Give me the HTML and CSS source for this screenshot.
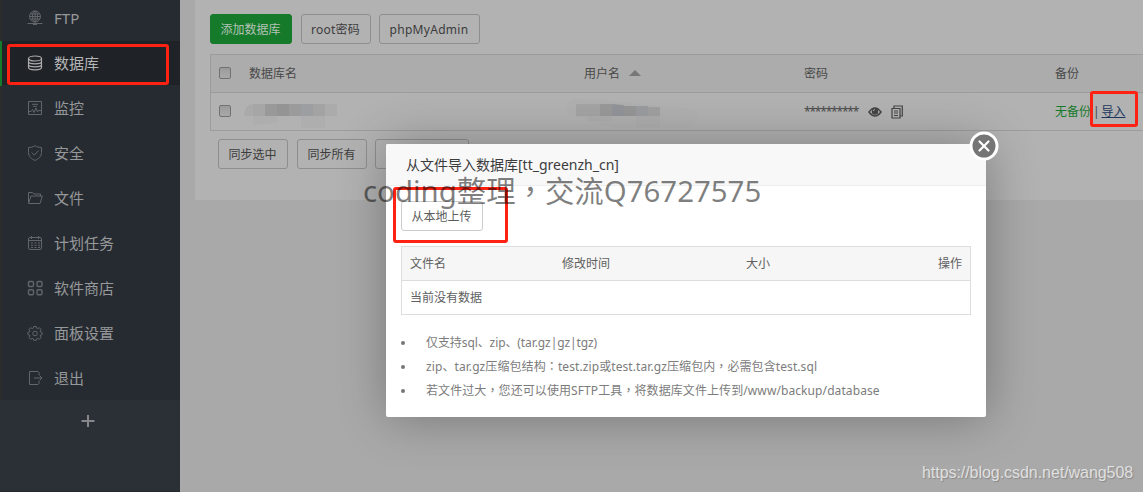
FILE: index.html
```html
<!DOCTYPE html>
<html lang="zh-CN">
<head>
<meta charset="utf-8">
<title>数据库</title>
<link rel="stylesheet" href="styles.css">
</head>
<body>
<div class="app">
  <aside class="sidebar">
    <nav class="menu">
      <a class="item"><svg class="icon" viewBox="0 0 16 16"><circle cx="8" cy="6.5" r="5.5"/><ellipse cx="8" cy="6.5" rx="2.6" ry="5.5"/><path d="M8 1v11M3 4h10M2.5 6.5h11M3 9h10M.5 13.5h15M6 14.5h4"/></svg><span>FTP</span></a>
      <a class="item active"><svg class="icon" viewBox="0 0 16 16"><ellipse cx="8" cy="3.5" rx="6.5" ry="2.5"/><path d="M1.5 3.5v9c0 1.4 2.9 2.3 6.5 2.3s6.5-.9 6.5-2.3v-9M1.5 6.5c0 1.4 2.9 2.3 6.5 2.3s6.5-.9 6.5-2.3M1.5 9.5c0 1.4 2.9 2.3 6.5 2.3s6.5-.9 6.5-2.3"/></svg><span>数据库</span></a>
      <a class="item"><svg class="icon" viewBox="0 0 16 16"><path d="M1.5 1.5h13v13h-13zM5 4.3h6M6 6.3h4M2 11.5h2l1.5-2 1.5 3 2-4.500 1.500 4 1-1.500h2.500"/></svg><span>监控</span></a>
      <a class="item"><svg class="icon" viewBox="0 0 16 16"><path d="M8 .7c2 1.300 4.300 1.800 6.500 1.800v5c0 3.900-2.800 6.300-6.500 7.900-3.700-1.600-6.500-4-6.500-7.900v-5C3.700 2.500 6 2 8 .7zM4.800 7.500l2.500 2.700 4.200-4.700"/></svg><span>安全</span></a>
      <a class="item"><svg class="icon" viewBox="0 0 16 16"><path d="M1.500 12.500v-10h4l1.500 1.500h6.500v2M1.500 13.500l2.500-7.500h11.300l-2.300 7.500z"/></svg><span>文件</span></a>
      <a class="item"><svg class="icon" viewBox="0 0 16 16"><rect x="1.500" y="2.500" width="13" height="12" rx="1.500"/><path d="M1.500 5.500h13M4.500 1v3M11.500 1v3"/><path stroke-dasharray="2 1.500" d="M4 8h9M4 10.300h9M4 12.500h9"/></svg><span>计划任务</span></a>
      <a class="item"><svg class="icon bold" viewBox="0 0 16 16"><rect x="1.500" y="1.500" width="5" height="5" rx="1.200"/><rect x="10" y="1.500" width="5" height="5" rx="1.200"/><rect x="1.500" y="9.700" width="5" height="5" rx="1.200"/><rect x="10" y="9.700" width="5" height="5" rx="1.200"/></svg><span>软件商店</span></a>
      <a class="item"><svg class="icon" viewBox="0 0 16 16"><path d="M6.700 1.500h2.600l.4 1.700 1 .5 1.600-1 1.700 1.700-.9 1.600.4 1 1.600.4v2.200l-1.600.4-.4 1 .9 1.600-1.700 1.700-1.600-.9-1 .4-.4 1.500H6.700l-.4-1.500-1-.4-1.600.9L2 12.600l.9-1.600-.4-1-1.600-.4V7.400L2.500 7l.4-1L2 4.400l1.700-1.700 1.600 1 1-.5z"/><circle cx="8" cy="8.500" r="2.300"/></svg><span>面板设置</span></a>
      <a class="item"><svg class="icon" viewBox="0 0 16 16"><path d="M12 5V2.500l-1-1H2.500v13H11l1-1V11M7 8h8M12.500 5.500L15 8l-2.500 2.500"/></svg><span>退出</span></a>
    </nav>
    <div class="add"><svg class="plus" viewBox="0 0 14 14"><path d="M7 1v12M.5 7h13"/></svg></div>
  </aside>
  <main class="main">
    <section class="panel">
      <div class="tools">
        <button class="btn green w82">添加数据库</button><button class="btn w70"><span class="root">root密码</span></button><button class="btn w101"><span class="pma">phpMyAdmin</span></button>
      </div>
      <div class="grid">
        <div class="row head">
          <span class="check"></span><span>数据库名</span><span class="sort">用户名 <i class="caret"></i></span><span>密码</span><span>备份</span>
        </div>
        <div class="row">
          <span class="check"></span>
          <svg class="mosaic" viewBox="0 0 120 36"><path fill="#aaa" d="M0 23q1-12 9-12h12v12H0z"/><path fill="#a6a6a6" d="M9 11h12v12H9z"/><path fill="#999" d="M21 11h12v12H21z"/><path fill="#949494" d="M33 11h12v12H33z"/><path fill="#9b9b9b" d="M45 11h12v12H45z"/><path fill="#9c9ea1" d="M57 11h12v12H57z"/><path fill="#a3a3a3" d="M69 11h12v12H69z"/><path fill="#ababab" d="M81 11h12v12H81z"/><path fill="#aeaeae" d="M9 23h24v7l-24 2zM57 23h24v12H57z"/></svg>
          <svg class="mosaic user" viewBox="0 0 140 36"><path fill="#b0b0b0" d="M0 14q2-9 15-8l100 9q17 1 16 9-1 9-12 11H60Q40 36 22 27L2 23z"/><path fill="#a4a4a4" d="M9 11h24v12H9z"/><path fill="#999" d="M33 11h12l12 1v11H33z"/><path fill="#929499" d="M45 11l12 2v10H45z"/><path fill="#969696" d="M57 13h12v10H57z"/><path fill="#9a9ca0" d="M69 13h12v10H69z"/><path fill="#a0a0a0" d="M81 14h12v9H81z"/><path fill="#adadad" d="M21 23h24v5H21zM69 23h24v11H69z"/></svg>
          <span class="secret"><span class="stars">**********</span>
            <svg class="eye" viewBox="0 0 14 12"><path d="M1 6Q7-2 13 6 7 14 1 6z" fill="none" stroke="#444" stroke-width="1.500"/><circle cx="7" cy="5.500" r="3.200" fill="#444"/><path d="M5.300 5q.2-1.500 1.700-1.500" stroke="#aaa" fill="none"/></svg>
            <svg class="copy" viewBox="0 0 12 14"><path d="M3 3V1h8.300v10H9M1 3.500h8V13H1zM3 6h4M3 8h4M3 10.500h4" fill="none" stroke="#444" stroke-width="1.200"/></svg></span>
          <span class="backup"><b>无备份</b> | <u>导入</u></span>
        </div>
      </div>
      <div class="tools sync"><button class="btn w70">同步选中</button><button class="btn w70">同步所有</button><button class="btn w94"></button></div>
    </section>
  </main>
</div>

<div class="modal">
  <h1 class="title">从文件导入数据库[tt_greenzh_cn]</h1>
  <div class="body">
    <button class="btn light w82">从本地上传</button>
    <div class="files">
      <div class="frow fhead"><span>文件名</span><span>修改时间</span><span>大小</span><span class="end">操作</span></div>
      <div class="frow">当前没有数据</div>
    </div>
    <ul class="notes">
      <li><span class="tight">仅支持sql、zip、(tar.gz|gz|tgz)</span></li>
      <li><span class="wide">zip、tar.gz压缩包结构<i class="mid" lang="zh-TW">：</i>test.zip或test.tar.gz压缩包内<i class="mid" lang="zh-TW">，</i>必需包含test.sql</span></li>
      <li><span class="wide">若文件过大<i class="mid" lang="zh-TW">，</i>您还可以使用SFTP工具<i class="mid" lang="zh-TW">，</i>将数据库文件上传到/www/backup/database</span></li>
    </ul>
  </div>
  <svg class="close" viewBox="0 0 30 30"><circle cx="15" cy="15" r="13" fill="#757575" stroke="#fff" stroke-width="3"/><path d="M10.500 10.500l9 9M19.500 10.500l-9 9" stroke="#fff" stroke-width="2.200" stroke-linecap="round"/></svg>
</div>
<div class="mark mark-menu"></div>
<div class="mark mark-import"></div>
<div class="mark mark-upload"></div>
<div class="coding">coding整理<i class="mid" lang="zh-TW">，</i>交流Q76727575</div>
<div class="url">https://blog.csdn.net/wang508</div>
</body>
</html>
```
FILE: styles.css
```css
* { box-sizing: border-box; }
body {
  margin: 0;
  width: 1143px;
  height: 492px;
  overflow: hidden;
  position: relative;
  background: #a9a9a9;
  color: #484848;
  font: 12px/18px "Noto Sans", "Noto Sans CJK SC", sans-serif;
}
.app { display: flex; height: 492px; overflow: hidden; }
.sidebar { width: 180px; flex: none; background: #2b2f36; border-bottom: 1px solid #25282c; }
.menu { margin-top: -4px; background: #262b31; }
.item {
  height: 45px;
  display: flex;
  align-items: center;
  gap: 11px;
  padding: 0 0 2px 25px;
  border-left: 2px solid #2a2c2b;
  color: #96989a;
  font-size: 15px;
}
.menu .item:last-child { height: 44px; padding-bottom: 1px; }
.item.active { background: #1f2226; border-left-color: #167a2b; color: #b4b5b6; box-shadow: inset 0 -1px #262b31; }
.icon { width: 16px; height: 16px; fill: none; stroke: #62666a; stroke-width: 1; }
.active .icon { stroke: #aaa; stroke-width: 1.2; }
.icon.bold { stroke-width: 1.4; }
.add { display: flex; padding: 14px 0 0 81px; }
.plus { width: 14px; height: 14px; stroke: #85878a; stroke-width: 2; }
.main { flex: 1; padding-left: 15px; min-width: 0; }
.panel { height: 200px; background: #b2b2b2; padding: 14px 0 0 15px; overflow: hidden; }
.tools { display: flex; gap: 9px; height: 30px; }
.tools .w101 { margin-left: -1px; }
.btn {
  height: 30px;
  padding: 2px 1px 0 0;
  border: 1px solid #8e8e8e;
  border-radius: 3px;
  background: transparent;
  color: #3c3c3c;
  font: inherit;
  white-space: nowrap;
}
.btn.green { background: #167a2b; border-color: #167a2b; color: #b3c2b6; }
.btn.light { background: #fff; border-color: #ccc; color: #5c5c5c; display: block; }
.w70 { width: 70px; }
.w82 { width: 82px; }
.w94 { width: 94px; margin-left: -1px; }
.w101 { width: 101px; }
.pma { letter-spacing: .3px; }
.root { letter-spacing: .2px; }
.grid { margin-top: 10px; width: 950px; border: 1px solid #9c9c9c; }
.row {
  display: grid;
  grid-template-columns: 38px 335px 220px 251px 1fr;
  align-items: center;
  height: 37px;
}
.row.head { height: 38px; background: #acacac; border-bottom: 1px solid #9c9c9c; }
.check {
  width: 12px;
  height: 12px;
  margin: 0 0 2px 8px;
  border: 1px solid #717171;
  border-radius: 2px;
  background: linear-gradient(#9b9b9b, #a9a9a9);
}
.sort { display: flex; align-items: center; gap: 9px; }
.caret { border: 6px solid transparent; border-top: 0; border-bottom-color: #777; margin-bottom: 2px; }
.mosaic { width: 120px; height: 36px; margin: 0 0 2px -5px; }
.mosaic.user { width: 140px; margin-left: -17px; }
.secret { display: flex; align-items: center; gap: 9px; }
.stars { letter-spacing: -1.2px; width: 55px; }
.eye { width: 14px; height: 12px; margin-bottom: 1px; }
.copy { width: 12px; height: 14px; margin-bottom: 1px; }
.backup { word-spacing: -1.2px; }
.backup b { font-weight: 400; color: #167a2b; }
.backup u { color: #1c365c; }
.sync { margin: 8px 0 0 8px; }

.modal {
  position: absolute;
  left: 386px;
  top: 144px;
  width: 600px;
  height: 273px;
  background: #fff;
  border-radius: 2px;
  box-shadow: 1px 1px 50px rgba(0, 0, 0, .3);
}
.title {
  margin: 0;
  height: 42px;
  padding-left: 20px;
  background: #f8f8f8;
  border-bottom: 1px solid #eee;
  border-radius: 2px 2px 0 0;
  color: #3c3c3c;
  font-size: 14px;
  font-weight: 400;
  line-height: 42px;
}
.body { padding: 15px; }
.files { margin-top: 15px; border: 1px solid #ddd; color: #606060; }
.frow { height: 33px; padding: 0 8px; line-height: 34px; }
.fhead {
  display: grid;
  grid-template-columns: 152px 184px 1fr auto;
  height: 34px;
  background: #f6f6f6;
  border-bottom: 1px solid #ddd;
}
.notes { margin: 16px 0 0; padding: 0; color: #7c7c7c; line-height: 24px; list-style: none; }
.notes li { display: flex; align-items: center; height: 24px; white-space: nowrap; }
.notes li::before { content: ""; width: 4px; height: 4px; margin-right: 21px; border-radius: 50%; background: #777; }
.wide { letter-spacing: .09px; }
.tight { letter-spacing: -.09px; }
.mid { font-family: "Noto Sans CJK TC", sans-serif; font-style: normal; line-height: 1; }
.close { position: absolute; left: 583px; top: -13px; width: 30px; height: 30px; }

.mark { position: absolute; border: 3px solid #ff2111; border-radius: 3px; }
.mark-menu { left: 7px; top: 44px; width: 162px; height: 41px; }
.mark-import { left: 1090px; top: 91px; width: 48px; height: 36px; }
.mark-upload { left: 393px; top: 187px; width: 115px; height: 56px; }
.coding { position: absolute; left: 363px; top: 171px; color: rgba(0, 0, 0, .5); font-size: 29.4px; line-height: 40px; white-space: nowrap; }
.url { position: absolute; left: 922px; top: 463px; color: #e0e0e0; font: 16px/20px "Liberation Sans", sans-serif; letter-spacing: -.05px; text-shadow: 1px 1px 1px #888; white-space: nowrap; }
```
